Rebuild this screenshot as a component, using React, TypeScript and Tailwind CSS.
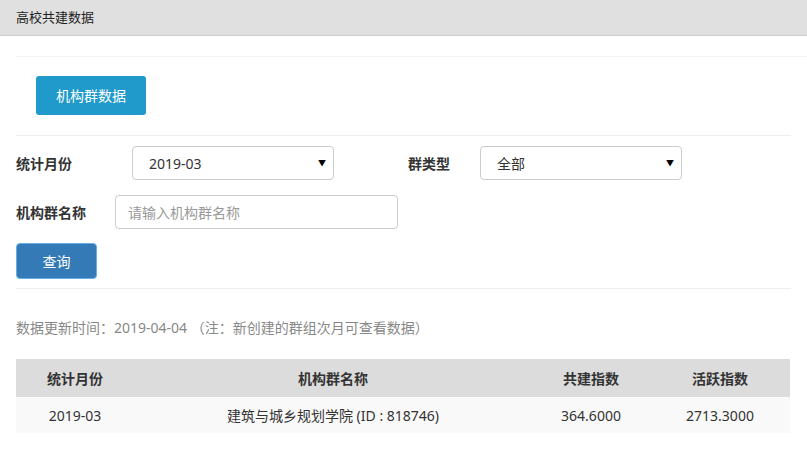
import React from 'react';

const font = { fontFamily: '"Noto Sans", "Noto Sans CJK SC", sans-serif' };

const rows = [
  { month: '2019-03', name: '建筑与城乡规划学院 (ID : 818746)', co: '364.6000', active: '2713.3000' },
];

function Select({ value }: { value: string }) {
  return (
    <div className="flex items-center justify-between w-[202px] h-[34px] border border-[#ccc] rounded-[4px] bg-white pl-[16px] pr-[7px] text-[14px] text-[#333]">
      <span>{value}</span>
      <span className="text-[8px] text-black">▼</span>
    </div>
  );
}

export default function App() {
  return (
    <div className="w-[807px] h-[472px] bg-white overflow-hidden" style={font}>
      {/* Header */}
      <div className="h-[36px] bg-[#e0e0e0] border-b border-[#cccccc] flex items-center px-[16px] text-[13px] text-[#222]">
        高校共建数据
      </div>

      <div className="pl-[16px]">
        <div className="h-[21px] border-b border-[#f3f3f3]" />

        {/* Tab button */}
        <div className="pl-[20px] pt-[19px] pb-[20px] border-b border-[#eeeeee] mr-[16px]">
          <button className="w-[110px] h-[39px] bg-[#1f9acb] rounded-[3px] text-white text-[14px]">
            机构群数据
          </button>
        </div>

        {/* Filters */}
        <div className="mr-[16px] border-b border-[#eeeeee] pb-[9px]">
          <div className="flex items-center pt-[10px] h-[44px]">
            <div className="w-[116px] text-[14px] font-bold text-[#333]">统计月份</div>
            <Select value="2019-03" />
            <div className="w-[72px] ml-[74px] text-[14px] font-bold text-[#333]">群类型</div>
            <Select value="全部" />
          </div>
          <div className="flex items-center mt-[15px] h-[34px]">
            <div className="w-[99px] text-[14px] font-bold text-[#333]">机构群名称</div>
            <div className="w-[283px] h-[34px] border border-[#ccc] rounded-[4px] flex items-center pl-[12px] text-[14px] text-[#999]">
              请输入机构群名称
            </div>
          </div>
          <button className="mt-[14px] w-[81px] h-[36px] bg-[#337ab7] border border-[#66afe9] rounded-[4px] text-white text-[14px]">
            查询
          </button>
        </div>

        {/* Update note */}
        <div className="pt-[29px] text-[14px] text-[#888] leading-[20px]">
          数据更新时间：2019-04-04 （注：新创建的群组次月可查看数据）
        </div>

        {/* Table */}
        <div className="mt-[21px] w-[774px] text-[14px] text-[#333]">
          <div className="flex h-[38px] items-center bg-[#dcdcdc] font-bold">
            <div className="w-[118px] text-center">统计月份</div>
            <div className="w-[398px] text-center">机构群名称</div>
            <div className="w-[118px] text-center">共建指数</div>
            <div className="w-[140px] text-center">活跃指数</div>
          </div>
          {rows.map((r) => (
            <div key={r.month} className="flex h-[36px] items-center bg-[#f9f9f9]">
              <div className="w-[118px] text-center">{r.month}</div>
              <div className="w-[398px] text-center">{r.name}</div>
              <div className="w-[118px] text-center">{r.co}</div>
              <div className="w-[140px] text-center">{r.active}</div>
            </div>
          ))}
        </div>
      </div>
    </div>
  );
}
